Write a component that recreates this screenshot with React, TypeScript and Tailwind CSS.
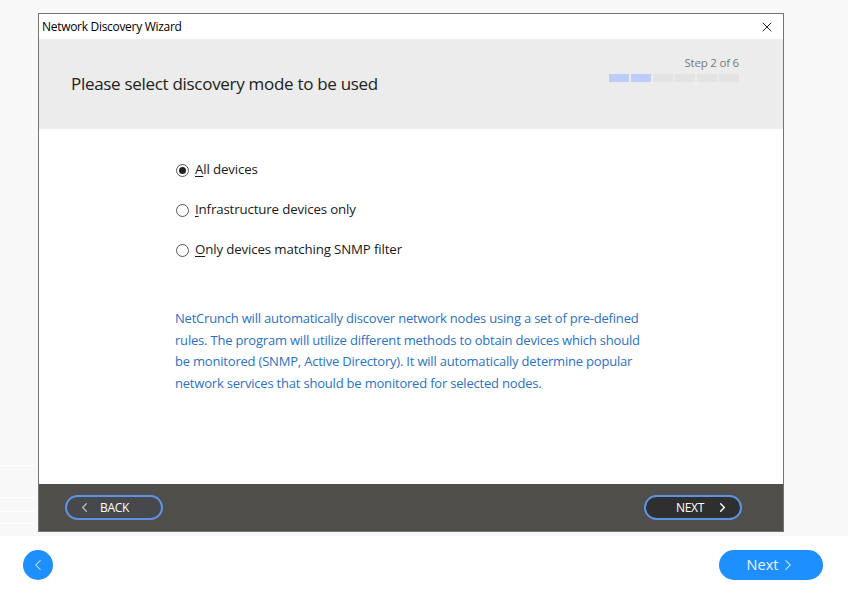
import { ChevronLeft, ChevronRight, X } from 'lucide-react';

const steps = [true, true, false, false, false, false];

const options = [
  { key: 'A', rest: 'll devices', checked: true },
  { key: 'I', rest: 'nfrastructure devices only', checked: false },
  { key: 'O', rest: 'nly devices matching SNMP filter', checked: false },
];

function Radio({ checked }: { checked: boolean }) {
  return (
    <span className="flex h-[13px] w-[13px] items-center justify-center rounded-full border border-[#555] bg-white">
      {checked && <span className="h-[7px] w-[7px] rounded-full bg-[#222]" />}
    </span>
  );
}

export default function App() {
  return (
    <div className="flex h-[593px] w-[848px] flex-col overflow-hidden bg-white" style={{ fontFamily: '"Open Sans", "Noto Sans", sans-serif' }}>
      {/* Wizard area */}
      <section className="relative h-[536px] bg-[#f8f8f8] pl-[38px] pt-[13px]">
        {/* faint left-side lines */}
        <div className="absolute left-0 top-[465px] h-px w-[35px] bg-white" />
        <div className="absolute left-0 top-[497px] h-px w-[35px] bg-white" />
        <div className="absolute left-0 top-[511px] h-px w-[35px] bg-white" />
        <div className="absolute left-0 top-[523px] h-px w-[35px] bg-white" />

        <div className="flex h-[519px] w-[746px] flex-col border border-[#747474] bg-white">
          {/* Title bar */}
          <div className="flex h-[25px] items-center justify-between pl-[3px] pr-[8px]">
            <span className="text-[12px] tracking-[-0.3px] text-black">Network Discovery Wizard</span>
            <X size={16} strokeWidth={1.3} className="text-black" />
          </div>

          {/* Header */}
          <div className="flex h-[90px] items-start justify-between bg-[#ececec] pl-[32px] pr-[44px]">
            <h1 className="mt-[32px] text-[17px] tracking-[-0.3px] text-[#222]">Please select discovery mode to be used</h1>
            <div className="mt-[15px] flex flex-col items-end">
              <span className="text-[11.5px] tracking-[-0.2px] text-[#7a7a7a]">Step 2 of 6</span>
              <div className="mt-[3px] flex gap-[2px]">
                {steps.map((done, i) => (
                  <div key={i} className={done ? 'h-[8px] w-[20px] bg-[#bbcdf8]' : 'h-[8px] w-[20px] bg-[#e3e3e3]'} />
                ))}
              </div>
            </div>
          </div>

          {/* Body */}
          <div className="flex flex-1 flex-col pl-[136px]">
            <div className="mt-[31px] flex flex-col gap-[20px]">
              {options.map((o) => (
                <label key={o.key} className="flex h-[20px] items-center gap-[6px] pl-[1px]">
                  <Radio checked={o.checked} />
                  <span className="text-[13.3px] tracking-[-0.15px] text-[#1a1a1a]">
                    <span className="underline underline-offset-2">{o.key}</span>
                    {o.rest}
                  </span>
                </label>
              ))}
            </div>
            <p className="mt-[48px] w-[468px] text-[13px] leading-[21.5px] tracking-[-0.2px] text-[#2a72c6]">
              NetCrunch will automatically discover network nodes using a set of pre-defined rules. The program will
              utilize different methods to obtain devices which should be monitored (SNMP, Active Directory). It will
              automatically determine popular network services that should be monitored for selected nodes.
            </p>
          </div>

          {/* Footer */}
          <div className="flex h-[47px] items-center justify-between bg-[#4f4e4a] pl-[26px] pr-[41px]">
            <button className="flex h-[25px] w-[98px] items-center rounded-full border-2 border-[#5d93e6] bg-[#47484b] pl-[10px]">
              <ChevronLeft size={15} strokeWidth={2} className="text-[#bdbdbd]" />
              <span className="ml-[8px] text-[12px] tracking-[-0.3px] text-white">BACK</span>
            </button>
            <button className="flex h-[25px] w-[98px] items-center justify-end rounded-full border-2 border-[#5d93e6] bg-[#2f2f2f] pr-[10px]">
              <span className="mr-[11px] text-[12px] tracking-[-0.3px] text-white">NEXT</span>
              <ChevronRight size={15} strokeWidth={2.2} className="text-white" />
            </button>
          </div>
        </div>
      </section>

      {/* Outer navigation */}
      <section className="flex flex-1 items-center justify-between pl-[23px] pr-[25px]">
        <button className="flex h-[30px] w-[30px] items-center justify-center rounded-full bg-[#1e8fff]">
          <ChevronLeft size={18} strokeWidth={1.4} className="text-[#dbeaff]" />
        </button>
        <button className="flex h-[30px] w-[104px] items-center justify-center gap-[1px] rounded-full bg-[#1e8fff] pl-[2px] text-[14.5px] text-[#eef5ff]">
          Next
          <ChevronRight size={18} strokeWidth={1.4} className="text-[#eef5ff]" />
        </button>
      </section>
    </div>
  );
}
